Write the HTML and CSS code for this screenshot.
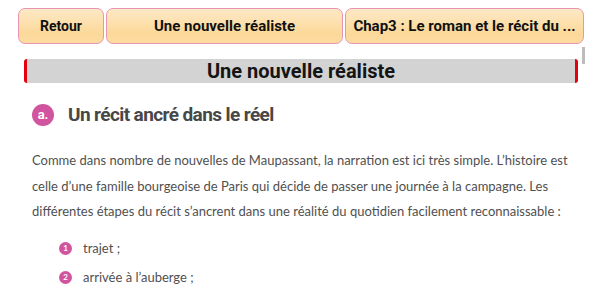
FILE: index.html
```html
<!DOCTYPE html>
<html lang="fr">
<head>
<meta charset="utf-8">
<link rel="stylesheet" href="styles.css">
</head>
<body>
<nav class="nav">
  <a class="btn btn-back">Retour</a>
  <a class="btn btn-mid">Une nouvelle réaliste</a>
  <a class="btn btn-chap">Chap3 : Le roman et le récit du ...</a>
</nav>
<div class="scroll-thumb"></div>
<h1 class="title-bar">Une nouvelle réaliste</h1>
<section class="content">
  <h2 class="sec-title"><span class="sec-num">a.</span><span>Un récit ancré dans le réel</span></h2>
  <p class="para">Comme dans nombre de nouvelles de Maupassant, la narration est ici très simple. L’histoire est celle d’une famille bourgeoise de Paris qui décide de passer une journée à la campagne. Les différentes étapes du récit s’ancrent dans une réalité du quotidien facilement reconnaissable :</p>
  <ol class="steps">
    <li class="step"><span class="step-num">1</span><span>trajet ;</span></li>
    <li class="step"><span class="step-num">2</span><span>arrivée à l’auberge ;</span></li>
  </ol>
</section>
</body>
</html>
```

FILE: styles.css
```css
html, body {
  margin: 0;
  padding: 0;
  background: #ffffff;
}
body {
  position: relative;
  width: 600px;
  height: 300px;
  overflow: hidden;
  font-family: Roboto, "Liberation Sans", sans-serif;
}
.nav {
  display: flex;
  gap: 2px;
  padding: 8px 16px 0 18px;
}
.btn {
  box-sizing: border-box;
  height: 36px;
  display: flex;
  align-items: center;
  justify-content: center;
  border: 1.5px solid #e994b0;
  border-radius: 7px;
  background: linear-gradient(#fde9c6, #fcd99a 70%, #fcdba2);
  color: #111;
  font-weight: 700;
  font-size: 15px;
  white-space: nowrap;
}
.btn-back { width: 86px; font-size: 14px; }
.btn-mid { width: 237px; }
.btn-chap { width: 239px; }
.scroll-thumb {
  position: absolute;
  left: 582px;
  top: 47px;
  width: 3px;
  height: 17px;
  background: #bdbdbd;
}
.title-bar {
  box-sizing: border-box;
  margin: 15px 22px 0 24px;
  height: 24px;
  line-height: 24px;
  background: #d3d3d3;
  border-left: 3px solid #e3000f;
  border-right: 3px solid #e3000f;
  border-radius: 3px;
  text-align: center;
  font-size: 20px;
  font-weight: 700;
  color: #151515;
}
.content {
  padding: 0 23px 0 32px;
}
.sec-title {
  display: flex;
  align-items: center;
  gap: 14px;
  margin: 20px 0 0 0;
  font-family: Roboto, sans-serif;
  font-size: 19px;
  letter-spacing: -0.6px;
  font-weight: 700;
  color: #474747;
}
.sec-num {
  width: 22px;
  height: 22px;
  border-radius: 50%;
  background: #d1559e;
  color: #fff;
  font-family: Roboto, sans-serif;
  font-size: 13px;
  letter-spacing: 0;
  display: flex;
  align-items: center;
  justify-content: center;
}
.para {
  margin: 22px 0 0 0;
  font-family: Lato, "Open Sans", sans-serif;
  font-size: 13px;
  line-height: 25.5px;
  color: #505050;
}
.steps {
  list-style: none;
  margin: 9px 0 0 0;
  padding: 0 0 0 27px;
  font-family: Lato, "Open Sans", sans-serif;
  font-size: 13px;
  color: #505050;
}
.step {
  display: flex;
  align-items: center;
  gap: 11px;
  height: 29px;
}
.step-num {
  width: 13px;
  height: 13px;
  border-radius: 50%;
  background: #d1559e;
  color: #fff;
  font-size: 8px;
  font-weight: 700;
  display: flex;
  align-items: center;
  justify-content: center;
}
```
